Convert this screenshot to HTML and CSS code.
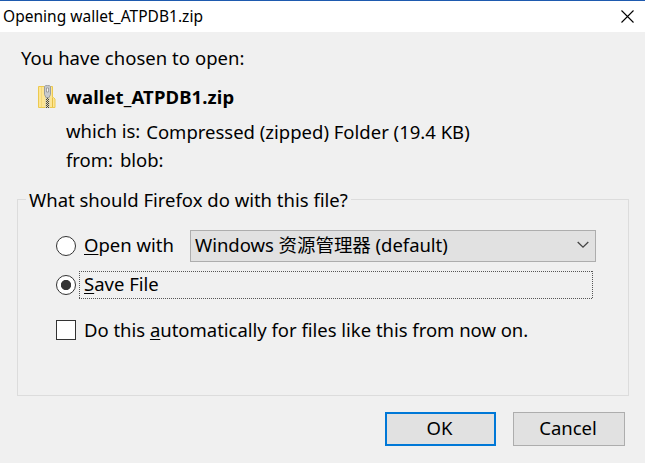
FILE: index.html
```html
<!DOCTYPE html>
<html lang="en">
<head>
<meta charset="utf-8">
<title>Opening wallet_ATPDB1.zip</title>
<link rel="stylesheet" href="styles.css">
</head>
<body>
<div class="dialog">
  <header class="titlebar">
    <span class="title">Opening wallet_ATPDB1.zip</span>
    <svg class="close" width="13" height="13" viewBox="0 0 13 13"><path d="M.5 .5l12 12M12.5 .5l-12 12" stroke="#000" stroke-width="1.1"/></svg>
  </header>
  <main class="content">
    <p class="intro">You have chosen to open:</p>
    <section class="file">
      <svg class="zip" width="19" height="24" viewBox="0 0 19 24">
        <path d="M1.500 1.500h14v11h1l1.500 1.500v8.500H1.500z" fill="#fde594" stroke="#ecc94f"/>
        <path d="M4.500 2v20" stroke="#f3d878"/>
        <path d="M15.500 13v9" stroke="#e5bf45"/>
        <path d="M8 10h5v13H8z" fill="#e2d8ac"/>
        <path d="M9.500 12v11" stroke="#444" stroke-dasharray="1 1"/>
        <path d="M10.500 13v10" stroke="#444" stroke-dasharray="1 1"/>
        <path d="M11.500 12v11" stroke="#444" stroke-dasharray="1 1"/>
        <path d="M7.500 1.500Q7.500 .5 10.500 .5t3 1v8l-1.500 3H9l-1.500-3z" fill="#c8cacc" stroke="#999da0"/>
        <path d="M9.500 3h2v4h-2z" fill="#f5f5f5" stroke="#777" stroke-width=".6"/>
      </svg>
      <div class="details">
        <strong class="name">wallet_ATPDB1.zip</strong>
        <div class="row type"><span>which is:</span><span class="kind">Compressed (zipped) Folder (19.4 KB)</span></div>
        <div class="row source"><span>from:</span><span>blob:</span></div>
      </div>
    </section>
    <fieldset class="group">
      <legend>What should Firefox do with this file?</legend>
      <div class="option open">
        <i class="radio"></i>
        <label><u>O</u>pen with</label>
        <div class="select"><span>Windows 资源管理器 (default)</span>
          <svg width="12" height="8" viewBox="0 0 12 8"><path d="M.7 1l5.300 5.200L11.300 1" fill="none" stroke="#444" stroke-width="1.300"/></svg>
        </div>
      </div>
      <div class="option save">
        <i class="radio on"></i>
        <label class="focus"><u>S</u>ave File</label>
      </div>
      <div class="option auto">
        <i class="check"></i>
        <label>Do this <u>a</u>utomatically for files like this from now on.</label>
      </div>
    </fieldset>
    <footer class="actions">
      <button class="btn ok">OK</button>
      <button class="btn cancel">Cancel</button>
    </footer>
  </main>
</div>
</body>
</html>
```
FILE: styles.css
```css
* { box-sizing: border-box; }
body {
  margin: 0;
  font: 18.5px/28px "Noto Sans", "Noto Sans CJK SC", sans-serif;
  color: #000;
  background: #f0f0f0;
}
.dialog { height: 463px; overflow: hidden; white-space: nowrap; }
.titlebar {
  height: 32px;
  border-top: 1px solid #1e5aaf;
  background: #fff;
  display: flex;
  align-items: center;
  justify-content: space-between;
  padding: 0 12px 0 3px;
  font-size: 15.5px;
}
.title { letter-spacing: .03px; margin-top: -1px; }
.close { margin-right: -1px; }
.content { padding: 12px 16px 0 17px; }
.intro { margin: 0 0 0 4px; height: 28px; letter-spacing: .04px; }
.file { display: flex; padding: 12px 0 0 20px; height: 127px; }
.zip { margin: 1px 10px 0 0; flex: none; }
.details { display: flex; flex-direction: column; }
.name { height: 28px; line-height: 26px; letter-spacing: .12px; }
.row { display: flex; gap: 6px; height: 28px; letter-spacing: -.03px; }
.type { margin-top: 5px; margin-bottom: 1px; }
.source { gap: 7px; }
.kind { padding-top: 1px; letter-spacing: 0; }
.group {
  margin: -12px 0 0;
  padding: 0 32px 0 38px;
  height: 209px;
  border: 1px solid #dcdcdc;
  min-width: 0;
}
legend { margin-left: -30px; padding: 0 3px; height: 24px; line-height: 26px; }
.option { display: flex; align-items: center; }
.radio, .check {
  width: 20px;
  height: 20px;
  border: 1px solid #333;
  background: #fff;
  flex: none;
}
.radio { border-radius: 50%; }
.radio.on { background: radial-gradient(circle, #333 4.7px, #fff 5.5px); }
u { text-decoration-thickness: 1px; text-underline-offset: 2px; text-decoration-skip-ink: none; }
.open { height: 32px; margin-top: 19px; }
.open label { margin-left: 8px; width: 106px; line-height: 26px; padding-bottom: 2px; }
.select {
  width: 406px;
  height: 32px;
  border: 1px solid #adadad;
  background: #e1e1e1;
  display: flex;
  align-items: center;
  justify-content: space-between;
  padding: 0 6px 2px 4px;
  letter-spacing: -.04px;
}
.save { margin-top: 9px; height: 28px; }
.focus {
  margin-left: 3px;
  width: 514px;
  height: 28px;
  padding-left: 5px;
  line-height: 25px;
  background:
    repeating-linear-gradient(90deg, #555 0 1px, transparent 1px 2px) top / 100% 1px no-repeat,
    repeating-linear-gradient(90deg, #555 0 1px, transparent 1px 2px) bottom / 100% 1px no-repeat,
    repeating-linear-gradient(#555 0 1px, transparent 1px 2px) left / 1px 100% no-repeat,
    repeating-linear-gradient(#555 0 1px, transparent 1px 2px) right / 1px 100% no-repeat;
}
.auto { margin-top: 17px; height: 28px; }
.auto label { margin-left: 8px; line-height: 28px; letter-spacing: -.02px; }
.actions { display: flex; justify-content: flex-end; gap: 17px; padding: 16px 4px 0 0; }
.btn {
  height: 34px;
  width: 112px;
  border: 1px solid #adadad;
  background: #e1e1e1;
  color: #000;
  font: inherit;
  padding: 0 2px 2px 0;
}
.ok { width: 111px; border: 2px solid #0078d7; }
```
